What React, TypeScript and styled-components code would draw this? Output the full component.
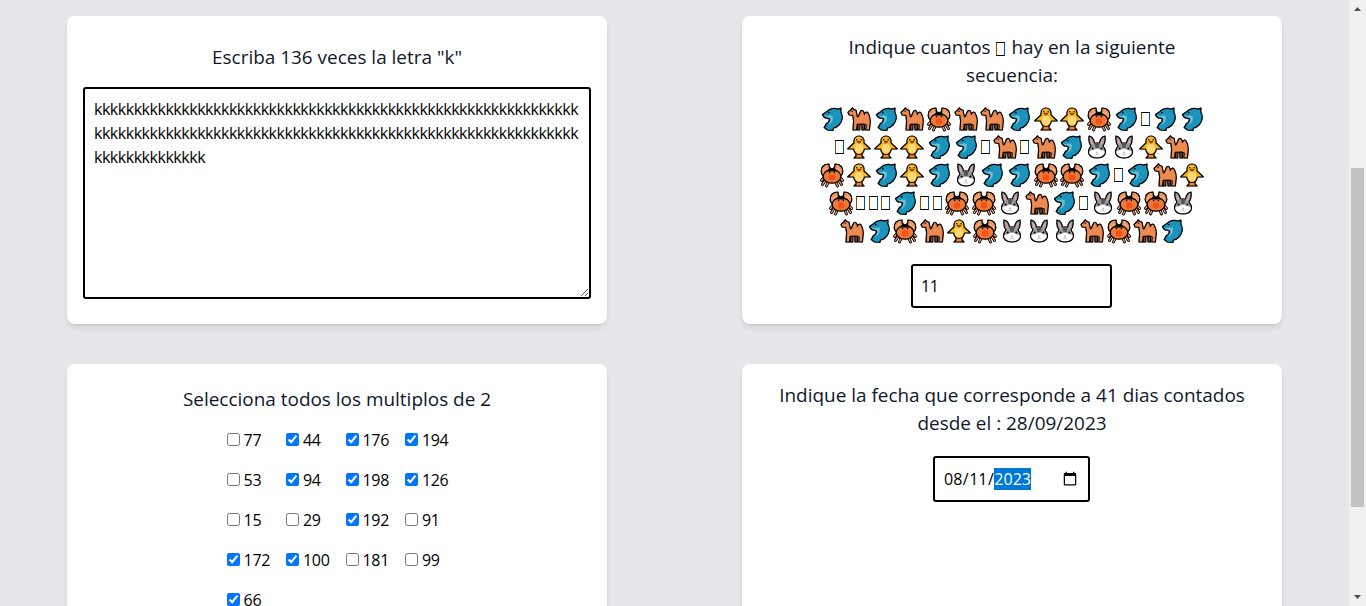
import React from "react";
import styled, { createGlobalStyle } from "styled-components";

const Global = createGlobalStyle`
  html, body { margin: 0; padding: 0; height: 100%; overflow: hidden; }
  body { background: #e5e7eb; font-family: "Open Sans", "Noto Sans", sans-serif; color: #0f172a; }
  * { box-sizing: border-box; }
`;

const Page = styled.div`
  display: flex;
  height: 606px;
  overflow: hidden;
`;
const Main = styled.main`
  flex: 1;
  min-width: 0;
  padding: 16px 67px 0;
  display: grid;
  grid-template-columns: 540px 540px;
  grid-template-rows: 308px 420px;
  justify-content: space-between;
  row-gap: 40px;
`;
const Card = styled.section<{ $top: number }>`
  background: #fff;
  border-radius: 8px;
  box-shadow: 0 4px 6px -1px rgba(0, 0, 0, 0.1), 0 2px 4px -2px rgba(0, 0, 0, 0.1);
  padding: ${(p) => p.$top}px 16px 16px;
  display: flex;
  flex-direction: column;
  align-items: center;
`;
const Title = styled.h2<{ $max?: number }>`
  margin: 0;
  font-size: 18.95px;
  line-height: 28px;
  font-weight: 400;
  text-align: center;
  max-width: ${(p) => (p.$max ? `${p.$max}px` : "none")};
`;
const Answer = styled.textarea`
  display: block;
  width: 508px;
  height: 212px;
  margin-top: 16px;
  padding: 8px 7px 8px 9px;
  border: 2px solid #000;
  border-radius: 3px;
  outline: none;
  background: #fff;
  color: #000;
  font-family: "Open Sans", sans-serif;
  font-size: 16px;
  line-height: 24px;
  letter-spacing: -0.47px;
  word-break: break-all;
  overflow: hidden;
`;
const Sequence = styled.div`
  margin-top: 16px;
  display: flex;
  flex-direction: column;
`;
const SeqRow = styled.div`
  display: flex;
  justify-content: center;
  align-items: center;
  height: 28px;
`;
const EmojiCell = styled.span`
  flex: 0 0 26.67px;
  height: 28px;
  display: flex;
  align-items: center;
  justify-content: center;
  svg {
    display: block;
    width: 24px;
    height: 24px;
    overflow: visible;
    filter: drop-shadow(0 0 0.6px rgba(0, 0, 0, 0.45));
  }
`;
const TofuCell = styled.span`
  flex: 0 0 12.5px;
  display: flex;
  justify-content: center;
`;
const Tofu = styled.span<{ $inline?: boolean }>`
  display: inline-block;
  width: 9px;
  height: 14px;
  border: 1px solid #000;
  border-left-color: #8a4a00;
  border-right-color: #00569c;
  vertical-align: -2px;
  margin: ${(p) => (p.$inline ? "0 1px" : "0")};
`;
const NumberInput = styled.input`
  margin: 19px 1px 0 0;
  width: 201px;
  height: 44px;
  padding: 8px;
  border: 2px solid #000;
  border-radius: 3px;
  outline: none;
  background: #fff;
  color: #000;
  font-family: "Open Sans", sans-serif;
  font-size: 16px;
  letter-spacing: -0.3px;
`;
const Checks = styled.div`
  margin: 15px 0 0 1px;
  display: grid;
  grid-template-columns: repeat(4, auto);
  justify-content: center;
  gap: 16px;
`;
const CheckLabel = styled.label`
  display: flex;
  align-items: center;
  height: 24px;
  font-size: 16px;
  letter-spacing: -0.33px;
  color: #000;
`;
const CheckBox = styled.input`
  width: 13px;
  height: 13px;
  margin: 0 4px 1px 0;
`;
const DateField = styled.input`
  margin: 19px 1px 0 0;
  width: 157px;
  height: 46px;
  padding: 8px 8px 8px 9px;
  border: 2px solid #000;
  border-radius: 3px;
  outline: none;
  background: #fff;
  color: #000;
  font-family: "Open Sans", sans-serif;
  font-size: 16px;
  &::-webkit-datetime-edit-year-field {
    background: #0078d7;
    color: #fff;
    padding: 0;
  }
  &::-webkit-datetime-edit-month-field,
  &::-webkit-datetime-edit-day-field { padding: 0; }
  &::-webkit-datetime-edit-text { padding: 0 0.5px; }
`;
const Scrollbar = styled.aside`
  flex: 0 0 17px;
  background: #f1f1f1;
  display: flex;
  flex-direction: column;
  align-items: center;
  height: 606px;
`;
const Arrow = styled.svg`
  display: block;
  width: 17px;
  height: 17px;
  flex: none;
`;
const Track = styled.div`
  flex: 1;
  width: 100%;
  padding: 151px 2px 0;
`;
const Thumb = styled.div`
  height: 339px;
  background: #c1c1c1;
`;

const Ol = { stroke: "#000", strokeWidth: 1.2, strokeLinejoin: "round" as const, strokeLinecap: "round" as const };

const Dolphin = () => (
  <svg viewBox="0 0 24 24">
    <path {...Ol} fill="#1b94bd" d="M2.5 7.5 7 4.4C10 1.4 14.6 0.8 17.6 2.2L21 1.2 20.8 5C23.2 9 22.6 14.5 19 18 17 20 15 20.8 13.4 21L13 23.4 7.4 23 4.2 20.6 6.4 16.6C8.2 15.8 9.4 14 9.6 12 8.6 11.8 8 11.4 7.4 11 5.6 11.2 3.4 10 2.5 7.5Z" />
    <path fill="#6dbdd6" d="M4 8.2C6 9.4 8.4 9 10 8.2L11.4 9 12.4 8.2C13.4 11 12.8 14 11 16 10 17 9 17.6 7.6 17.9 9.4 16.2 10.6 14 10.4 11.4 9.4 11.2 8.6 10.6 7.8 10.2 6.2 10.4 4.8 9.6 4 8.2Z" />
    <circle cx="8.8" cy="5.6" r="0.9" fill="#000" />
  </svg>
);
const Camel = () => (
  <svg viewBox="0 0 24 24">
    <path fill="#8a4318" stroke="#000" strokeWidth="1.1" strokeLinejoin="round" d="M10.4 15V23H12.8L13 16ZM14.6 16 15 23H17.4L17.6 15Z" />
    <path {...Ol} fill="#ee8a50" d="M1 5.4 3.6 3 5.4 0.8 6.6 2.4 9 3.2 10.4 10C12 10.2 12 6 13.8 4 15.4 2.6 17 4 17.4 7.4 18.4 4.4 20.6 4.6 21.6 7 23 10 23.6 14 23 17L22.4 23H18.8L19.2 18 16.5 17 10.2 17.4 9.6 23H6L6.6 14 5.8 8.4 2.2 8Z" />
    <circle cx="5.2" cy="4.2" r="0.7" fill="#000" />
  </svg>
);
const Chick = () => (
  <svg viewBox="0 0 24 24">
    <path {...Ol} fill="#f7831e" d="M9 18V21L7 23H17L15 21V18Z" />
    <path {...Ol} fill="#ffb81c" d="M12 1C8.8 1 7 3.4 7 6.2L7 8 0.8 13.8 6.6 14C7.2 17.4 9 19.5 12 19.5 15 19.5 16.8 17.4 17.4 14L23.2 13.8 17 8 17 6.2C17 3.4 15.2 1 12 1Z" />
    <ellipse cx="12" cy="13.4" rx="4.2" ry="4.8" fill="#ffd87a" />
    <path fill="#f4761a" stroke="#000" strokeWidth="0.6" d="M10 6.4H14L12 8.4Z" />
    <circle cx="9.8" cy="4.8" r="0.8" fill="#000" />
    <circle cx="14.2" cy="4.8" r="0.8" fill="#000" />
  </svg>
);
const Crab = () => (
  <svg viewBox="0 0 24 24">
    <path fill="none" stroke="#000" strokeWidth="2.8" strokeLinecap="round" d="M4 14.5 1.5 17.5M5 17.5 2.5 21.5M8 19.5 6.5 23M20 14.5 22.5 17.5M19 17.5 21.5 21.5M16 19.5 17.5 23" />
    <path fill="none" stroke="#f7a074" strokeWidth="1.2" strokeLinecap="round" d="M4 14.5 1.5 17.5M5 17.5 2.5 21.5M8 19.5 6.5 23M20 14.5 22.5 17.5M19 17.5 21.5 21.5M16 19.5 17.5 23" />
    <path {...Ol} fill="#f09860" d="M9 1C3.5 1 1 4.5 1.2 8.6 1.6 11.4 3 13 5 13L7 8.5 9.5 5ZM15 1C20.5 1 23 4.5 22.8 8.6 22.4 11.4 21 13 19 13L17 8.5 14.5 5Z" />
    <path fill="#f2a779" d="M4.4 5.5 9 5 7 9 4.6 12 3 9ZM19.6 5.5 15 5 17 9 19.4 12 21 9Z" />
    <ellipse {...Ol} cx="12" cy="13.4" rx="8.8" ry="6.8" fill="#ee7a36" />
    <path fill="#000" d="M8.6 3 12 5.4 15.4 3 14.6 6.8 17 8.4 7 8.4 9.4 6.8Z" />
    <circle cx="12" cy="14.4" r="3.2" fill="#f4501a" />
    <circle cx="9.6" cy="9.6" r="0.8" fill="#000" />
    <circle cx="14.4" cy="9.6" r="0.8" fill="#000" />
  </svg>
);
const Rabbit = () => (
  <svg viewBox="0 0 24 24">
    <path {...Ol} fill="#9a9a9a" d="M4 1C7 1.5 9 5 9.5 8H14.5C15 5 17 1.5 20 1 20.5 5 19.5 9 18 11 20 13.5 21 16.5 20 19 18.5 22 15 23 12 23 9 23 5.5 22 4 19 3 16.5 4 13.5 6 11 4.5 9 3.5 5 4 1Z" />
    <path fill="#d9a0a0" d="M5.4 3.2C6.8 4.2 8 6.4 8.4 8.4L7 9.6C5.8 8 5.3 5.4 5.4 3.2ZM18.6 3.2C17.2 4.2 16 6.4 15.6 8.4L17 9.6C18.2 8 18.7 5.4 18.6 3.2Z" />
    <path fill="#555" d="M9.5 8H14.5L13.4 14H10.6Z" />
    <path fill="#fff" d="M10.6 13.5H13.4C14 15 17 15 19.4 16 19.8 17.4 19.4 18.6 19 19.2 17.4 21.4 14.6 22 12 22 9.4 22 6.6 21.4 5 19.2 4.6 18.6 4.2 17.4 4.6 16 7 15 10 15 10.6 13.5Z" />
    <circle cx="7.6" cy="13.6" r="1" fill="#000" />
    <circle cx="16.4" cy="13.6" r="1" fill="#000" />
    <path fill="#e58f9a" d="M10.6 16.8H13.4L12 18.4Z" />
    <path fill="none" stroke="#999" strokeWidth="0.5" d="M12 18.4V19.6M9.6 20 12 19.6 14.4 20" />
  </svg>
);

const glyphs: Record<string, React.FC> = { D: Dolphin, C: Camel, P: Chick, K: Crab, R: Rabbit };
const rows = [
  "DCDCKCCDPPKDTDD",
  "TPPPDDTCTCDRRPC",
  "KPDPDRDDKKDTDCP",
  "KTTTDTTKKRCDTRKKR",
  "CDKCPKRRRCKCD",
];

const numbers: [number, boolean][] = [
  [77, false], [44, true], [176, true], [194, true],
  [53, false], [94, true], [198, true], [126, true],
  [15, false], [29, false], [192, true], [91, false],
  [172, true], [100, true], [181, false], [99, false],
  [66, true],
];

export default function App() {
  return (
    <Page>
      <Global />
      <Main>
        <Card $top={27}>
          <Title>Escriba 136 veces la letra "k"</Title>
          <Answer defaultValue={"k".repeat(136)} spellCheck={false} />
        </Card>
        <Card $top={17}>
          <Title $max={360}>
            Indique cuantos <Tofu $inline /> hay en la siguiente secuencia:
          </Title>
          <Sequence>
            {rows.map((row, i) => (
              <SeqRow key={i}>
                {row.split("").map((c, j) => {
                  if (c === "T") return <TofuCell key={j}><Tofu /></TofuCell>;
                  const G = glyphs[c];
                  return <EmojiCell key={j}><G /></EmojiCell>;
                })}
              </SeqRow>
            ))}
          </Sequence>
          <NumberInput type="text" defaultValue="11" />
        </Card>
        <Card $top={21}>
          <Title>Selecciona todos los multiplos de 2</Title>
          <Checks>
            {numbers.map(([n, on]) => (
              <CheckLabel key={n}>
                <CheckBox type="checkbox" defaultChecked={on} />
                {n}
              </CheckLabel>
            ))}
          </Checks>
        </Card>
        <Card $top={17}>
          <Title $max={480}>Indique la fecha que corresponde a 41 dias contados desde el : 28/09/2023</Title>
          <DateField type="date" defaultValue="2023-08-11" />
        </Card>
      </Main>
      <Scrollbar>
        <Arrow viewBox="0 0 17 17"><polygon points="5,11 12,11 8.5,7" fill="#505050" /></Arrow>
        <Track><Thumb /></Track>
        <Arrow viewBox="0 0 17 17"><polygon points="5,6 12,6 8.5,10" fill="#505050" /></Arrow>
      </Scrollbar>
    </Page>
  );
}
